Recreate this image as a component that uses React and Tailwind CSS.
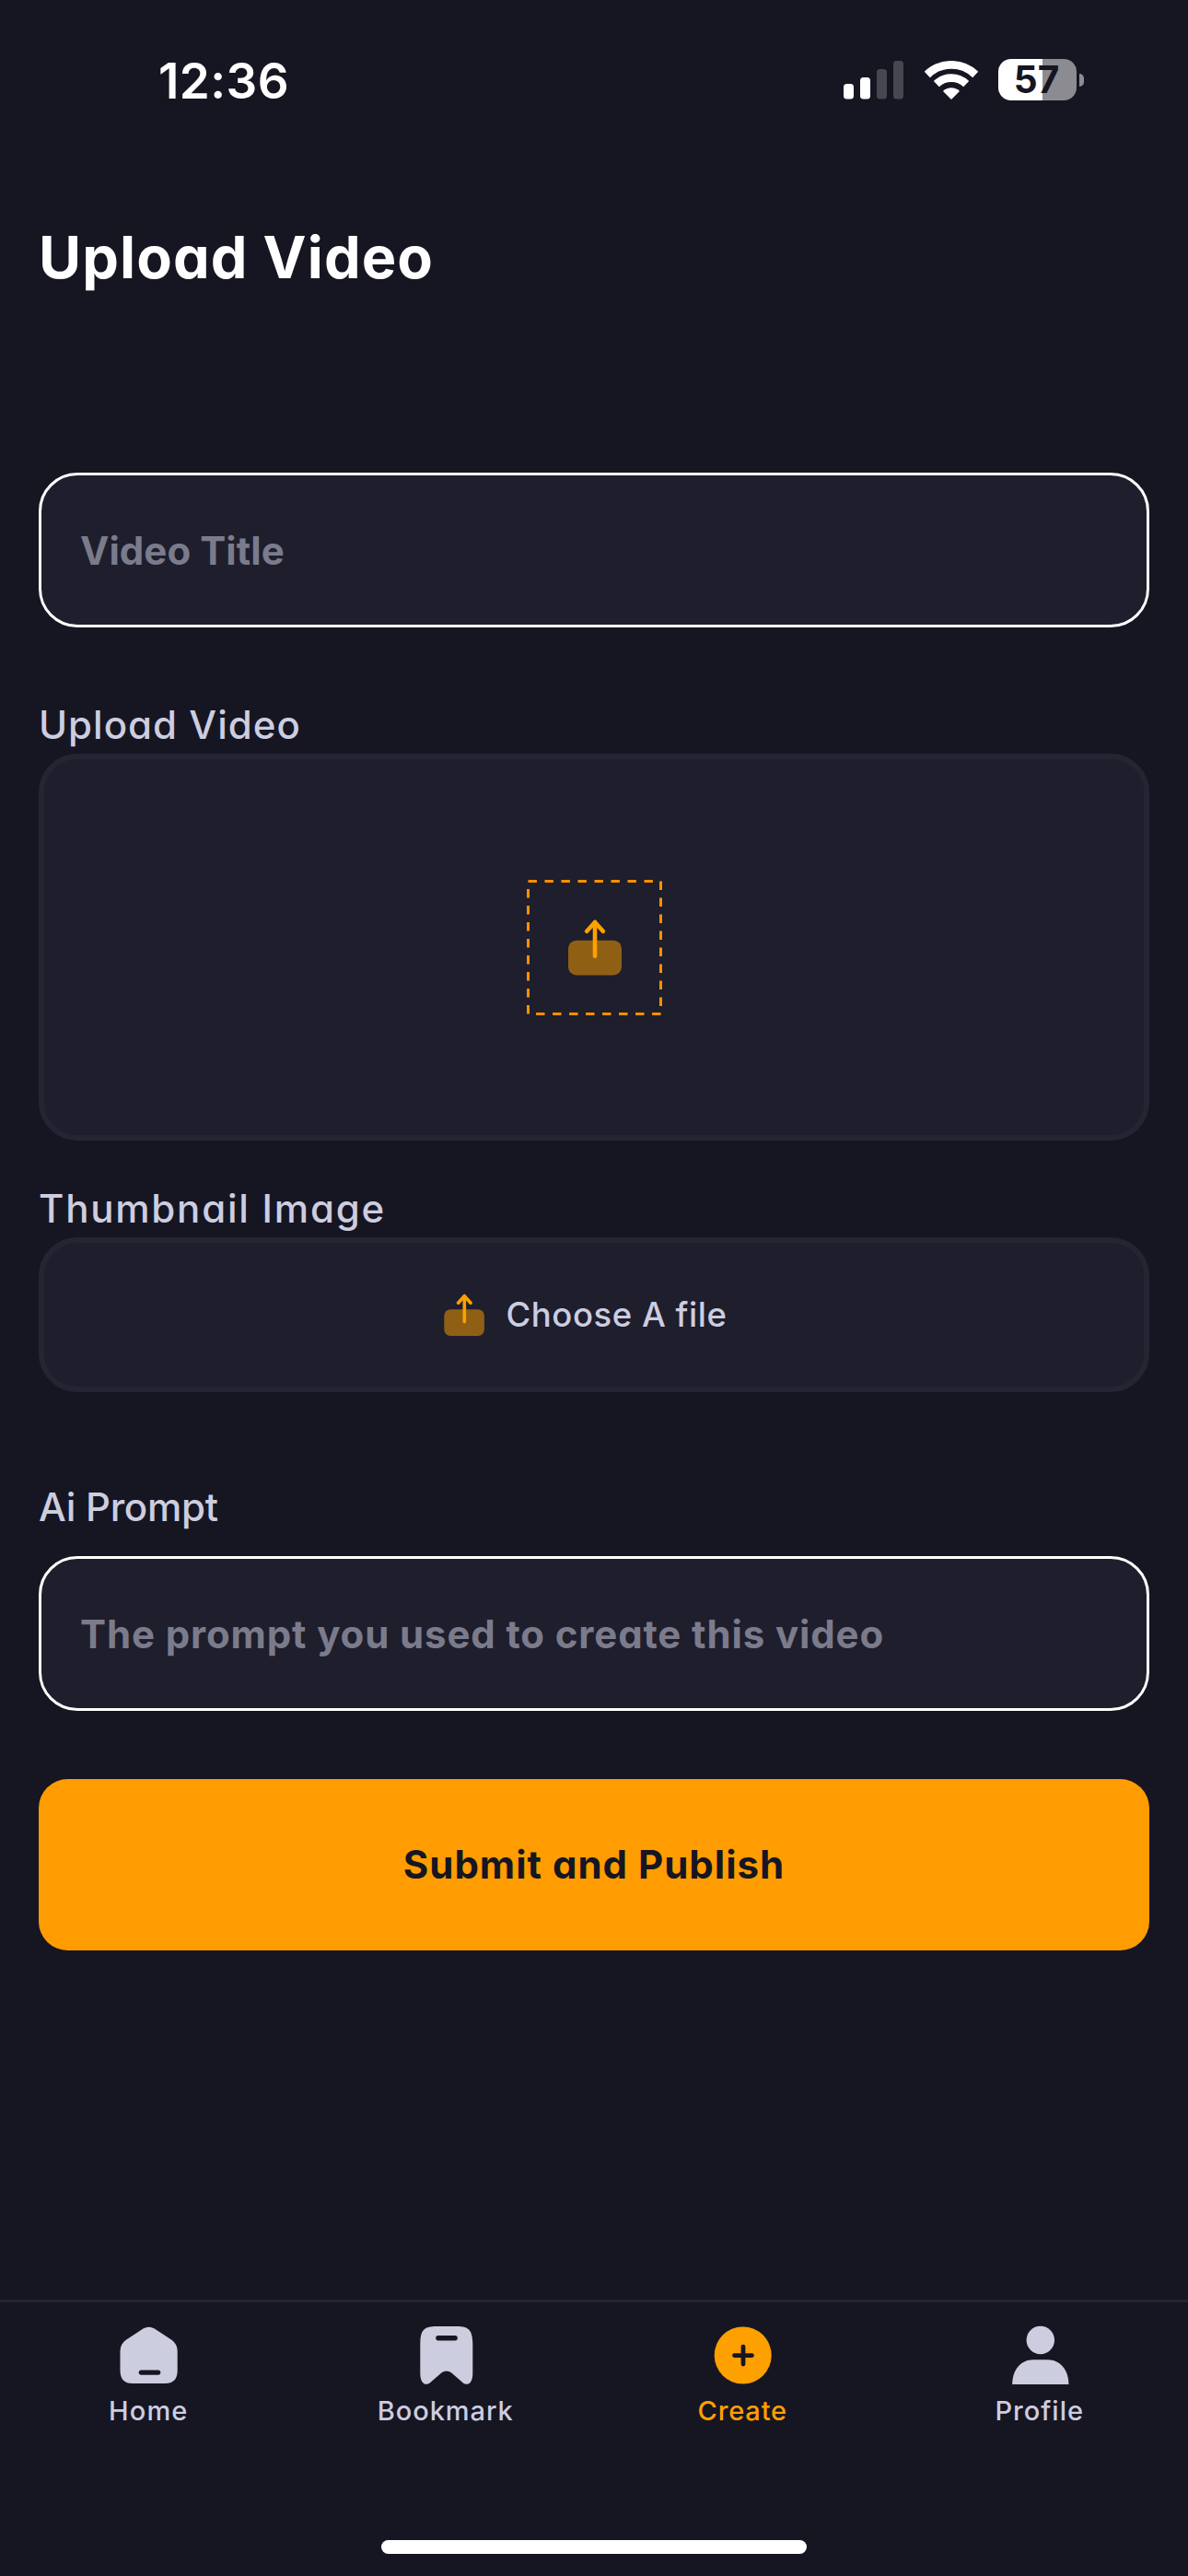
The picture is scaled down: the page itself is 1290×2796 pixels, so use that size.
import React from "react";

function SignalIcon() {
  return (
    <svg width="65" height="42" viewBox="0 0 65 42" fill="#fff">
      <rect x="0" y="25" width="11" height="16.5" rx="3.5" />
      <rect x="18" y="18" width="11" height="23.5" rx="3.5" />
      <rect x="36" y="9" width="11" height="32.5" rx="3.5" fill="#474751" />
      <rect x="54" y="0" width="11" height="41.5" rx="3.5" fill="#474751" />
    </svg>
  );
}

function WifiIcon() {
  return (
    <svg width="58" height="42" viewBox="-29 -42 58 42" fill="none" stroke="#fff">
      <path d="M-26.2 -27A37.6 37.6 0 0 1 26.2 -27" strokeWidth="8.8" />
      <path d="M-16.2 -16.8A23.3 23.3 0 0 1 16.2 -16.8" strokeWidth="8.6" />
      <path d="M0 0L-9 -9A12.9 12.9 0 0 1 9 -9Z" fill="#fff" stroke="none" />
    </svg>
  );
}

function Battery() {
  return (
    <div className="flex items-center gap-[3px]">
      <div className="flex h-[45px] w-[85px] items-center justify-center rounded-[14px] bg-[linear-gradient(90deg,#ffffff_48px,#8b8b91_48px)] pr-[2px] pt-px">
        <span className="text-[40.5px] leading-none font-bold text-[#161622]">57</span>
      </div>
      <div className="h-[14px] w-[5px] rounded-r-full bg-[#8b8b91]" />
    </div>
  );
}

function UploadIconLarge() {
  return (
    <svg width="147" height="147" viewBox="0 0 147 147" fill="none">
      <rect x="1.5" y="1.5" width="144" height="144" stroke="#FF9001" strokeWidth="3" strokeDasharray="9.4 8.6" />
      <rect x="45" y="65.7" width="58" height="37.8" rx="9" fill="#8F6014" />
      <path d="M74 82.7V45.8M65.2 55.8L74 46L82.8 55.8" stroke="#FFA001" strokeWidth="4.6" strokeLinecap="round" strokeLinejoin="round" />
    </svg>
  );
}

function UploadIconSmall() {
  return (
    <svg width="44" height="46" viewBox="0 0 44 46" fill="none">
      <rect x="0.3" y="17.3" width="43.6" height="28.6" rx="6.8" fill="#8F6014" />
      <path d="M22.3 30.6V2.6M15.6 10.2L22.3 2.6L29 10.2" stroke="#FFA001" strokeWidth="3.6" strokeLinecap="round" strokeLinejoin="round" />
    </svg>
  );
}

function HomeIcon() {
  return (
    <svg width="72" height="72" viewBox="0 0 72 72" fill="currentColor">
      <path d="M30.5 7.6Q36.6 3.9 42.7 7.6L61 19.5Q67.7 24 67.7 32V53Q67.7 67 54 67H19Q5.5 67 5.5 53V32Q5.5 24 12.2 19.5Z" />
      <rect x="25.7" y="52.5" width="23.6" height="5.2" rx="2.6" fill="#161622" />
    </svg>
  );
}

function BookmarkIcon() {
  return (
    <svg width="72" height="72" viewBox="0 0 72 72" fill="currentColor">
      <path d="M8.3 26C8.3 9 12 5 26 5H47.5C61.5 5 65.3 9 65.3 26V56C65.3 67 59.5 71 53.5 65.2L42 55.2Q36.8 51.7 31.6 55.2L20.1 65.2C14.1 71 8.3 67 8.3 56Z" />
      <rect x="25.2" y="15.1" width="23.6" height="5.4" rx="2.7" fill="#161622" />
    </svg>
  );
}

function CreateIcon() {
  return (
    <svg width="72" height="72" viewBox="0 0 72 72" fill="currentColor">
      <circle cx="36.7" cy="36.5" r="31" />
      <path d="M27.5 36.6H46.5M37 27.1V46.1" stroke="#161622" strokeWidth="4.8" strokeLinecap="round" />
    </svg>
  );
}

function ProfileIcon() {
  return (
    <svg width="72" height="72" viewBox="0 0 72 72" fill="currentColor">
      <circle cx="36.8" cy="20" r="15.2" />
      <path d="M6.2 68C6.2 52 15.5 41.2 29 41.2H44.6C58 41.2 67.4 52 67.4 68Z" />
    </svg>
  );
}

const tabs = [
  { label: "Home", Icon: HomeIcon, color: "text-[#CDCDE0]", tracking: "tracking-[1.18px]" },
  { label: "Bookmark", Icon: BookmarkIcon, color: "text-[#CDCDE0]", tracking: "tracking-[0.94px]" },
  { label: "Create", Icon: CreateIcon, color: "text-[#FFA001]", tracking: "tracking-[0.85px]" },
  { label: "Profile", Icon: ProfileIcon, color: "text-[#CDCDE0]", tracking: "tracking-[1.03px]" },
];

const geometric = "[font-feature-settings:'cv11']";

function Label({ children, className }) {
  return (
    <div className={`h-[60px] text-[42px] leading-[58px] font-medium whitespace-nowrap text-[#CDCDE0] ${geometric} ${className}`}>
      {children}
    </div>
  );
}

function Field({ children, className }) {
  return (
    <div className={`flex h-[168px] items-center rounded-[42px] border-3 border-white bg-[#1E1E2D] pt-px pl-[42px] text-[42px] font-bold whitespace-nowrap text-[#7B7B8B] ${geometric} ${className}`}>
      {children}
    </div>
  );
}

export default function App() {
  return (
    <div className="flex h-[2796px] w-[1290px] flex-col overflow-hidden bg-[#161622] font-['Inter',sans-serif]">
      <header className="flex h-[176px] items-center justify-between pr-[113px] pl-[172px]">
        <div className="pt-px text-[53px] leading-none font-semibold tracking-[0.4px] text-white">12:36</div>
        <div className="flex items-center pb-[3px]">
          <SignalIcon />
          <div className="ml-[22.5px]"><WifiIcon /></div>
          <div className="ml-[22.5px]"><Battery /></div>
        </div>
      </header>

      <main className="flex flex-col px-[42px]">
        <h1 className={`mt-[60px] h-[88px] text-[63px] leading-[87px] font-bold tracking-[1.1px] text-white ${geometric}`}>
          Upload Video
        </h1>

        <Field className="mt-[189px] tracking-[0.05px]">
          <span>Video Title</span>
        </Field>

        <Label className="mt-[77px] tracking-[1.03px]">Upload Video</Label>
        <div className="flex h-[420px] items-center justify-center rounded-[42px] border-6 border-[#232533] bg-[#1E1E2D] pt-px pl-px">
          <UploadIconLarge />
        </div>

        <Label className="mt-[45px] tracking-[1.78px]">Thumbnail Image</Label>
        <div className={`flex h-[168px] items-center justify-center gap-6 rounded-[42px] border-6 border-[#232533] bg-[#1E1E2D] pr-[21px] text-[36.5px] font-medium tracking-[0.54px] text-[#CDCDE0] ${geometric}`}>
          <UploadIconSmall />
          <span className="mr-[19px] w-[219px] whitespace-nowrap">Choose A file</span>
        </div>

        <Label className="mt-[96px] tracking-[-0.26px]">Ai Prompt</Label>
        <Field className="mt-[22px] tracking-[0.87px]">
          <span>The prompt you used to create this video</span>
        </Field>

        <button className={`mt-[74px] h-[186px] rounded-[31.5px] bg-[#FF9C01] pb-px text-[42px] font-bold tracking-[1px] text-[#161622] ${geometric}`}>
          Submit and Publish
        </button>
      </main>

      <nav className="mt-auto flex h-[300px] flex-col border-t-3 border-[#232533]">
        <div className="grid grid-cols-4 pt-[21px]">
          {tabs.map(({ label, Icon, color, tracking }) => (
            <div key={label} className={`flex flex-col items-center ${color}`}>
              <Icon />
              <span className={`mt-2 text-[29px] leading-[33px] font-medium ${tracking}`}>{label}</span>
            </div>
          ))}
        </div>
        <div className="mt-auto mb-6 h-[15px] w-[462px] self-center rounded-full bg-white" />
      </nav>
    </div>
  );
}
